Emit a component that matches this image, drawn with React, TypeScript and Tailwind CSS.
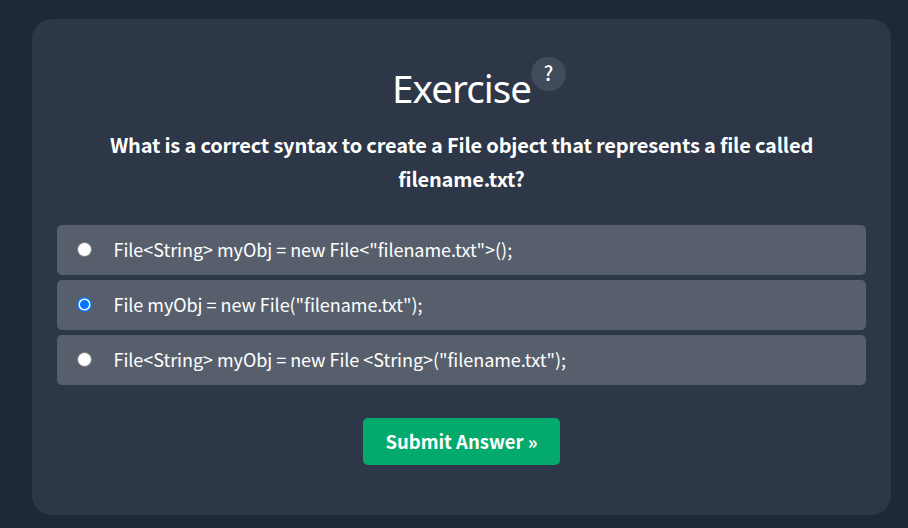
import { useState } from "react";

const answers = [
  'File<String> myObj = new File<"filename.txt">();',
  'File myObj = new File("filename.txt");',
  'File<String> myObj = new File <String>("filename.txt");',
];

export default function App() {
  const [selected, setSelected] = useState(1);

  return (
    <div className="h-[528px] w-[908px] overflow-hidden bg-[#1d2a35] pt-[19px] pl-8 font-['Noto_Sans_CJK_SC',sans-serif] text-white">
      <main className="flex h-[496px] w-[859px] flex-col items-center rounded-[20px] bg-[#2d3748] px-[25px] pt-[38px]">
        <header className="flex h-[70px] items-start pl-[35px]">
          <h1 className="pt-[3px] font-['Noto_Sans',sans-serif] text-[38.5px] leading-[56px] tracking-[-0.95px] whitespace-nowrap">
            Exercise
          </h1>
          <button className="flex h-[34px] w-[35px] items-center justify-center rounded-full bg-[#424b5a] pb-[2px] text-[20px] leading-none font-medium">
            ?
          </button>
        </header>
        <h2 className="mt-px text-center text-[20px] leading-[34px] font-bold tracking-[-0.19px]">
          <span className="block whitespace-nowrap">What is a correct syntax to create a File object that represents a file called</span>
          <span className="block">filename.txt?</span>
        </h2>
        <form className="mt-[29px] flex w-full flex-col items-center" onSubmit={(e) => e.preventDefault()}>
          <div className="flex w-full flex-col gap-[5px]">
            {answers.map((answer, i) => (
              <label key={i} className="flex h-[50px] items-center rounded-[5px] bg-[#575f6d] pl-[20px]">
                <input
                  type="radio"
                  name="answer"
                  className="mb-px size-[15px] appearance-none rounded-full border border-[#767676] bg-white checked:border-[#0075ff] checked:bg-[#0075ff] checked:shadow-[inset_0_0_0_0.5px_#0075ff,inset_0_0_0_2px_white]"
                  checked={selected === i}
                  onChange={() => setSelected(i)}
                />
                <span className="ml-[21.5px] pb-[2px] text-[18px] leading-[30px] tracking-[-0.045px] whitespace-nowrap">
                  {answer}
                </span>
              </label>
            ))}
          </div>
          <button className="mt-[33px] flex h-[47px] w-[197px] items-center justify-center rounded-[5px] bg-[#04aa6d] text-[18.5px] font-bold whitespace-nowrap">
            Submit Answer »
          </button>
        </form>
      </main>
    </div>
  );
}
